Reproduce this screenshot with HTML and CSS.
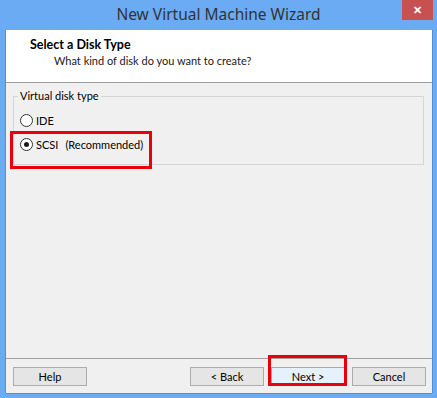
FILE: index.html
```html
<!DOCTYPE html>
<html lang="en">
<head>
    <meta charset="UTF-8">
    <title>New Virtual Machine Wizard</title>
    <link rel="stylesheet" href="styles.css">
</head>
<body>

    <div class="window">
        <!-- Barra de titulo -->
        <div class="titlebar">
            <span class="title">New Virtual Machine Wizard</span>
            <div class="close-btn">&#x2715;</div>
        </div>

        <div class="client">
            <!-- Cabecalho branco -->
            <div class="header">
                <h3>Select a Disk Type</h3>
                <p>What kind of disk do you want to create?</p>
            </div>

            <!-- Grupo com os tipos de disco -->
            <fieldset class="group">
                <legend>Virtual disk type</legend>
                <label class="radio-row">
                    <span class="radio"></span>
                    <span>IDE</span>
                </label>
                <label class="radio-row">
                    <span class="radio checked"></span>
                    <span>SCSI</span>
                    <span class="hint">(Recommended)</span>
                </label>
            </fieldset>

            <div class="spacer"></div>

            <!-- Botoes -->
            <div class="footer">
                <button class="btn">Help</button>
                <div class="right-buttons">
                    <button class="btn">&lt; Back</button>
                    <button class="btn default">Next &gt;</button>
                    <button class="btn">Cancel</button>
                </div>
            </div>
        </div>

        <!-- Marcas vermelhas -->
        <div class="mark mark-scsi"></div>
        <div class="mark mark-next"></div>
    </div>

</body>
</html>
```

FILE: styles.css
```css
body {
    margin: 0;
    padding: 0;
    background-color: #6babf4;
    font-family: 'Lato', 'Noto Sans', sans-serif;
    font-size: 11px;
    color: #000;
}

.window {
    position: relative;
    width: 437px;
    height: 398px;
    display: flex;
    flex-direction: column;
}

/* Titulo */
.titlebar {
    height: 30px;
    display: flex;
    justify-content: center;
    align-items: center;
    flex-shrink: 0;
}

.title {
    font-family: 'Noto Sans', sans-serif;
    font-size: 15.5px;
    color: #333;
    margin-top: -2px;
}

.close-btn {
    position: absolute;
    top: 0;
    left: 402px;
    width: 31px;
    height: 20px;
    background-color: #c75050;
    color: #fff;
    font-size: 11px;
    font-weight: bold;
    display: flex;
    justify-content: center;
    align-items: center;
}

/* Area do cliente */
.client {
    margin: 0 5px 0 6px;
    height: 363px;
    background-color: #f0f0f0;
    display: flex;
    flex-direction: column;
    box-shadow: -1px 0 0 #4d8fd9, 1px 0 0 #4d8fd9, 0 1px 0 #4d8fd9;
}

.header {
    background-color: #fff;
    border-bottom: 1px solid #a0a0a0;
    padding: 7px 0 0 24px;
    height: 45px;
}

.header h3 {
    margin: 0;
    font-size: 12.5px;
    font-weight: bold;
    line-height: 16px;
}

.header p {
    margin: 0 0 0 24px;
    line-height: 16px;
    color: #1a1a1a;
}

/* Grupo */
.group {
    margin: 5px 8px 0 7px;
    padding: 4px 4px 8px 4px;
    border: 1px solid #d5d5d5;
}

.group legend {
    padding: 0 2px;
    line-height: 16px;
}

.radio-row {
    display: flex;
    align-items: center;
    height: 24px;
    padding-left: 2px;
}

.radio {
    width: 11px;
    height: 11px;
    border: 1px solid #333;
    border-radius: 50%;
    background-color: #fff;
    margin-right: 3px;
    position: relative;
}

.radio.checked::after {
    content: "";
    position: absolute;
    top: 3px;
    left: 3px;
    width: 5px;
    height: 5px;
    border-radius: 50%;
    background-color: #1a1a1a;
}

.hint {
    margin-left: 7px;
}

.spacer {
    flex: 1;
}

/* Rodape */
.footer {
    border-top: 1px solid #a0a0a0;
    padding: 8px 6px 7px 7px;
    display: flex;
    justify-content: space-between;
}

.right-buttons {
    display: flex;
    gap: 7px;
}

.btn {
    width: 74px;
    height: 19px;
    padding: 0;
    font-family: 'Lato', 'Noto Sans', sans-serif;
    font-size: 11px;
    color: #000;
    background-color: #e5e5e5;
    border: 1px solid #acacac;
    border-radius: 0;
}

.btn.default {
    background-color: #e5f1fb;
    border-color: #7eb4ea;
}

/* Marcas vermelhas */
.mark {
    position: absolute;
    border: 3px solid #e8000d;
}

.mark-scsi {
    left: 10px;
    top: 131px;
    width: 136px;
    height: 32px;
}

.mark-next {
    left: 268px;
    top: 355px;
    width: 73px;
    height: 25px;
}
```
